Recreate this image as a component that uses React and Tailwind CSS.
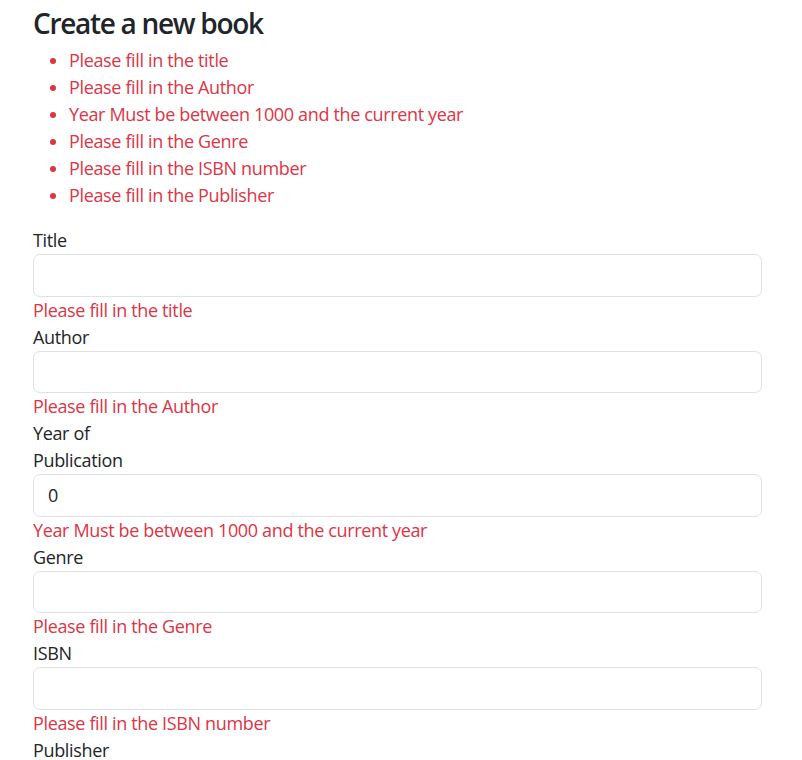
const errors = [
  'Please fill in the title',
  'Please fill in the Author',
  'Year Must be between 1000 and the current year',
  'Please fill in the Genre',
  'Please fill in the ISBN number',
  'Please fill in the Publisher',
]

const fields = [
  { label: 'Title', error: 'Please fill in the title' },
  { label: 'Author', error: 'Please fill in the Author' },
  { label: 'Year of Publication', error: 'Year Must be between 1000 and the current year', value: '0' },
  { label: 'Genre', error: 'Please fill in the Genre' },
  { label: 'ISBN', error: 'Please fill in the ISBN number' },
  { label: 'Publisher', error: 'Please fill in the Publisher' },
]

export default function App() {
  return (
    <div
      className="h-screen overflow-hidden bg-white text-[#212529] text-[18px] leading-[27px] tracking-[-0.35px]"
      style={{ fontFamily: '"Open Sans", "Noto Sans", sans-serif' }}
    >
      <div className="pl-[33px] pr-[40px] pt-[6px]">
        <h3 className="text-[28px] leading-[34px] font-semibold tracking-[-1.3px] mb-[7px]">Create a new book</h3>

        {/* Validation summary */}
        <ul className="list-disc pl-[36px] mb-[18px] text-[#dc3545]">
          {errors.map(e => (
            <li key={e}>{e}</li>
          ))}
        </ul>

        <form>
          {fields.map(f => (
            <div key={f.label}>
              <label className="block w-[110px]">{f.label}</label>
              <input
                readOnly
                value={f.value || ''}
                className="block w-full h-[42.5px] px-[14px] border border-[#dee2e6] rounded-[7px] bg-white outline-none text-[#212529]"
              />
              <div className="text-[#dc3545]">{f.error}</div>
            </div>
          ))}
        </form>
      </div>
    </div>
  )
}
